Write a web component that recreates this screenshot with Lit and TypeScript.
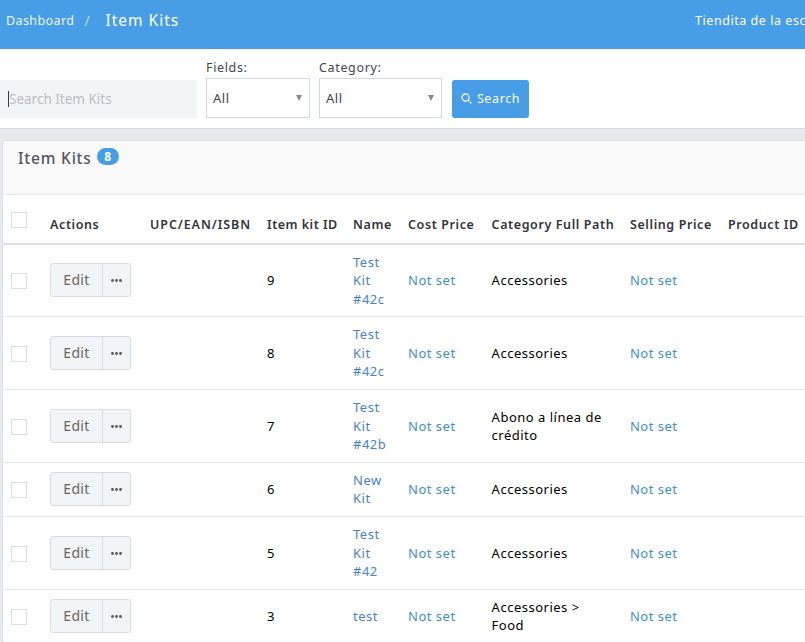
import { LitElement, html, css, svg } from "lit";
import { customElement } from "lit/decorators.js";

interface Row { id: string; name: string[]; cat: string[]; h: number; }

const ROWS: Row[] = [
  { id: "9", name: ["Test", "Kit", "#42c"], cat: ["Accessories"], h: 72 },
  { id: "8", name: ["Test", "Kit", "#42c"], cat: ["Accessories"], h: 73 },
  { id: "7", name: ["Test", "Kit", "#42b"], cat: ["Abono a línea de", "crédito"], h: 73 },
  { id: "6", name: ["New", "Kit"], cat: ["Accessories"], h: 54 },
  { id: "5", name: ["Test", "Kit", "#42"], cat: ["Accessories"], h: 73 },
  { id: "3", name: ["test"], cat: ["Accessories >", "Food"], h: 54 },
];

const HEADS = ["Actions", "UPC/EAN/ISBN", "Item kit ID", "Name", "Cost Price", "Category Full Path", "Selling Price", "Product ID"];
const COLS = [39, 100, 117, 86, 55, 83.6, 138.4, 98, 100];

@customElement("app-root")
export class AppRoot extends LitElement {
  static styles = css`
    :host {
      display: block;
      width: 805px;
      height: 642px;
      overflow: hidden;
      background: #e8e9ed;
      font-family: "Noto Sans", "Open Sans", sans-serif;
      font-size: 13px;
      letter-spacing: 0.5px;
      color: #000;
    }
    .top {
      height: 49px;
      box-sizing: border-box;
      background: #489de7;
      color: #fff;
      display: flex;
      align-items: flex-start;
      padding: 11px 0 0 6px;
      white-space: nowrap;
    }
    .crumb { font-size: 12.5px; line-height: 19px; color: #eef6fd; letter-spacing: 0.4px; }
    .sep { font-size: 15px; line-height: 19px; color: #b9d9f5; margin: 0 15px 0 10px; }
    .title { font-size: 15.5px; line-height: 18px; letter-spacing: 1px; }
    .store { margin-left: auto; width: 110px; font-size: 12.5px; line-height: 19px; letter-spacing: 0.55px; overflow: hidden; }
    .bar {
      height: 80px;
      box-sizing: border-box;
      background: #fff;
      border-bottom: 1px solid #d9dce5;
      display: flex;
      align-items: flex-end;
      padding-bottom: 10px;
    }
    .search {
      width: 197px;
      height: 38px;
      box-sizing: border-box;
      background: #f2f5f8;
      color: #bbbcc2;
      font-size: 13.5px;
      letter-spacing: 0;
      display: flex;
      align-items: center;
      padding: 0 0 0 8px;
      margin-right: 9px;
    }
    .caret { width: 1px; height: 16px; background: #3a3a4a; }
    .field { display: flex; flex-direction: column; margin-right: 9px; }
    .field label { font-size: 12.5px; line-height: 17px; height: 19px; color: #45454f; letter-spacing: 0.65px; }
    .select {
      height: 40px;
      box-sizing: border-box;
      border: 1px solid #d3d7e2;
      background: #fff;
      display: flex;
      align-items: center;
      justify-content: space-between;
      padding: 0 7px 0 6px;
      font-size: 13px;
      color: #44444f;
    }
    .fields { width: 104px; }
    .category { width: 123px; }
    .arrow { width: 0; height: 0; border-left: 3.5px solid transparent; border-right: 3.5px solid transparent; border-top: 6px solid #8a8a8a; }
    .btn {
      width: 77px;
      height: 38px;
      margin-left: 1px;
      box-sizing: border-box;
      background: #489de7;
      color: #fff;
      border-radius: 3px;
      display: flex;
      align-items: center;
      justify-content: center;
      gap: 5px;
      padding-bottom: 1px;
      font-size: 12.5px;
      letter-spacing: 0.6px;
    }
    .panel {
      margin: 11px 0 0 2px;
      width: 900px;
      background: #fff;
      border: 1px solid #dcdfe7;
      border-width: 1px 0 0 1px;
    }
    .phead {
      height: 54px;
      box-sizing: border-box;
      background: #f9f9fa;
      border-bottom: 1px solid #e4e6ec;
      padding: 7px 0 0 15px;
      display: flex;
      align-items: flex-start;
      gap: 5px;
    }
    .phead h2 { margin: 0; font-size: 15.5px; line-height: 20px; font-weight: 500; color: #555560; letter-spacing: 0.8px; }
    .badge {
      background: #489de7;
      color: #fff;
      width: 22px;
      height: 17px;
      border-radius: 9px;
      font-size: 12px;
      font-weight: 700;
      line-height: 17px;
      text-align: center;
      letter-spacing: 0;
    }
    table { border-collapse: collapse; table-layout: fixed; width: 817px; }
    th {
      height: 49px;
      box-sizing: border-box;
      padding: 11px 0 0 8px;
      text-align: left;
      font-size: 12.5px;
      font-weight: 600;
      letter-spacing: 0.6px;
      color: #33333c;
      white-space: nowrap;
      border-bottom: 2px solid #dcdfe7;
    }
    th.upc { letter-spacing: 0.93px; }
    th.kit { letter-spacing: 0.5px; }
    th.chk { padding: 1px 0 0 8px; vertical-align: middle; }
    td {
      box-sizing: border-box;
      padding: 0 0 0 8px;
      vertical-align: middle;
      border-bottom: 1px solid #e6e8ee;
      line-height: 18.5px;
      font-size: 13px;
    }
    tr.low td { padding-top: 1px; }
    .cb { display: block; width: 16px; height: 16px; box-sizing: border-box; border: 1px solid #d9dce5; background: #fff; }
    td .cb { margin-top: 1px; }
    .link { color: #4a83c4; }
    .link2 { color: #3f8fc8; }
    .group { display: inline-flex; height: 34px; box-sizing: border-box; border: 1px solid #d9dce5; border-radius: 3px; background: #f2f5f8; vertical-align: middle; }
    .edit { width: 51px; display: flex; align-items: center; justify-content: center; border-right: 1px solid #d9dce5; color: #6b6560; font-size: 14px; letter-spacing: 0.3px; }
    .more { width: 27px; display: flex; align-items: center; justify-content: center; }
  `;

  private searchIcon() {
    return svg`<svg width="11" height="11" viewBox="0 0 11 11" fill="none" stroke="#fff" stroke-width="1.2"><circle cx="4.5" cy="4.5" r="3.6"/><path d="M7.2 7.2 10.4 10.4"/></svg>`;
  }

  private dots() {
    return svg`<svg width="11" height="3" viewBox="0 0 11 3" fill="#555"><circle cx="1.5" cy="1.5" r="1.4"/><circle cx="5.5" cy="1.5" r="1.4"/><circle cx="9.5" cy="1.5" r="1.4"/></svg>`;
  }

  private lines(items: string[]) {
    return items.map((t, i) => html`${i ? html`<br />` : ""}${t}`);
  }

  private headClass(h: string) {
    return h === "UPC/EAN/ISBN" ? "upc" : h === "Item kit ID" ? "kit" : "";
  }

  render() {
    return html`
      <div class="top">
        <span class="crumb">Dashboard</span>
        <span class="sep">/</span>
        <span class="title">Item Kits</span>
        <span class="store">Tiendita de la escuela</span>
      </div>
      <div class="bar">
        <div class="search"><span class="caret"></span>Search Item Kits</div>
        <div class="field">
          <label>Fields:</label>
          <div class="select fields"><span>All</span><span class="arrow"></span></div>
        </div>
        <div class="field">
          <label>Category:</label>
          <div class="select category"><span>All</span><span class="arrow"></span></div>
        </div>
        <div class="btn">${this.searchIcon()}<span>Search</span></div>
      </div>
      <div class="panel">
        <div class="phead"><h2>Item Kits</h2><span class="badge">8</span></div>
        <table>
          <colgroup>${COLS.map((w) => html`<col style="width:${w}px" />`)}</colgroup>
          <thead>
            <tr>
              <th class="chk"><span class="cb"></span></th>
              ${HEADS.map((h) => html`<th class=${this.headClass(h)}>${h}</th>`)}
            </tr>
          </thead>
          <tbody>
            ${ROWS.map(
              (r) => html`
                <tr class=${r.h === 73 ? "low" : ""} style="height:${r.h}px">
                  <td><span class="cb"></span></td>
                  <td>
                    <span class="group"><span class="edit">Edit</span><span class="more">${this.dots()}</span></span>
                  </td>
                  <td></td>
                  <td>${r.id}</td>
                  <td class="link">${this.lines(r.name)}</td>
                  <td class="link2">Not set</td>
                  <td>${this.lines(r.cat)}</td>
                  <td class="link2">Not set</td>
                  <td></td>
                </tr>
              `
            )}
          </tbody>
        </table>
      </div>
    `;
  }
}
